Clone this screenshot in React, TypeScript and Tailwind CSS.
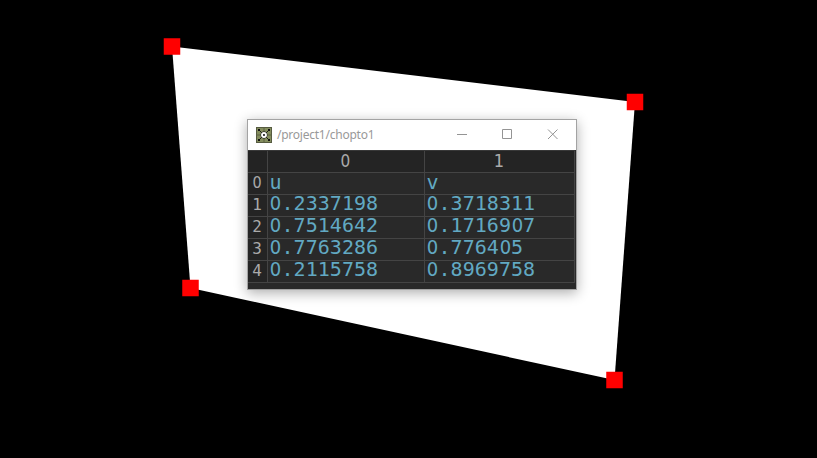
import React from "react";

const rows = [
  ["u", "v"],
  ["0.2337198", "0.3718311"],
  ["0.7514642", "0.1716907"],
  ["0.7763286", "0.776405"],
  ["0.2115758", "0.8969758"],
];

const corners = [
  [172, 46.5],
  [635, 102],
  [614.5, 380],
  [190.5, 288],
];

// The monospace zero is dotted; the proportional one is plain.
function Mono({ text }: { text: string }) {
  return (
    <>
      {text.split(/(0)/).filter(Boolean).map((part, i) =>
        part === "0" ? (
          <span key={i} className="inline-block w-[0.602em] text-center">
            <span className="-mx-[0.1em] inline-block scale-x-[0.9] font-['DejaVu_Sans',sans-serif]">0</span>
          </span>
        ) : (
          <span key={i}>{part}</span>
        )
      )}
    </>
  );
}

function ProjectIcon() {
  return (
    <svg width="16" height="16" viewBox="0 0 16 16" className="shrink-0">
      <rect width="16" height="16" fill="#565b40" />
      <rect x="1" y="1" width="14" height="14" fill="#848d5e" />
      <path d="M8 0v16M0 8h16" stroke="#5a6142" />
      <path d="M3 3l10 10M13 3L3 13" stroke="#111" strokeWidth="0.9" />
      <path d="M2 2h2v2H2zM12 2h2v2h-2zM2 12h2v2H2zM12 12h2v2h-2z" fill="#111" />
      <circle cx="8" cy="8" r="3.4" fill="#111" />
      <circle cx="8" cy="8" r="2" fill="#111" stroke="#fff" strokeWidth="1.9" />
    </svg>
  );
}

export default function App() {
  return (
    <main className="relative h-[458px] w-[817px] overflow-hidden bg-black">
      <svg width="817" height="458" className="block">
        <polygon points={corners.map((c) => c.join(",")).join(" ")} fill="#fff" />
        {corners.map(([x, y]) => (
          <rect key={x} x={x - 8.25} y={y - 8.25} width="16.5" height="16.5" fill="#f00" />
        ))}
      </svg>
      <section className="absolute left-[247px] top-[119px] flex h-[171px] w-[330px] flex-col border border-[#a3a3a3] bg-[#292929] shadow-[0_3px_12px_rgba(0,0,0,0.32)]">
        <header className="flex h-[30px] shrink-0 items-center bg-white pl-2">
          <ProjectIcon />
          <h1 className="ml-[5px] flex-1 font-['Noto_Sans',sans-serif] text-[12px] leading-[30px] tracking-[-0.24px] text-[#999]">
            /project1/chopto1
          </h1>
          <svg width="120" height="30" viewBox="456 120 120 30" fill="none" stroke="#949494">
            <path d="M457 134.5h10M502.500 129.500h9v9h-9zM548 129.500l9.500 9.500M557.500 129.500L548 139" />
          </svg>
        </header>
        <div className="grid w-[327px] grid-cols-[20px_157px_150px] border-t border-[#383838] font-['DejaVu_Sans_Mono',monospace]">
          <div className="h-[22px] border-b border-r border-[#444] bg-[#232323]" />
          {["0", "1"].map((h) => (
            <div key={h} className="h-[22px] border-b border-r border-[#444] bg-[#242424] pr-[2px] text-center text-[17px] leading-[20px] text-[#aaa]">
              <Mono text={h} />
            </div>
          ))}
          {rows.map((row, i) => (
            <React.Fragment key={i}>
              <div className="h-[22px] border-b border-r border-[#444] bg-[#242424] pr-px text-center text-[16px] leading-[19px] text-[#aaa]">
                <Mono text={String(i)} />
              </div>
              {row.map((v) => (
                <div
                  key={v}
                  className={`h-[22px] whitespace-nowrap border-b border-r border-[#444] pl-[1.5px] text-[20px] tracking-[0.04px] text-[#62a9c3] ${i === 0 ? "leading-[19px]" : "leading-[17px]"}`}
                >
                  <Mono text={v} />
                </div>
              ))}
            </React.Fragment>
          ))}
        </div>
      </section>
    </main>
  );
}
